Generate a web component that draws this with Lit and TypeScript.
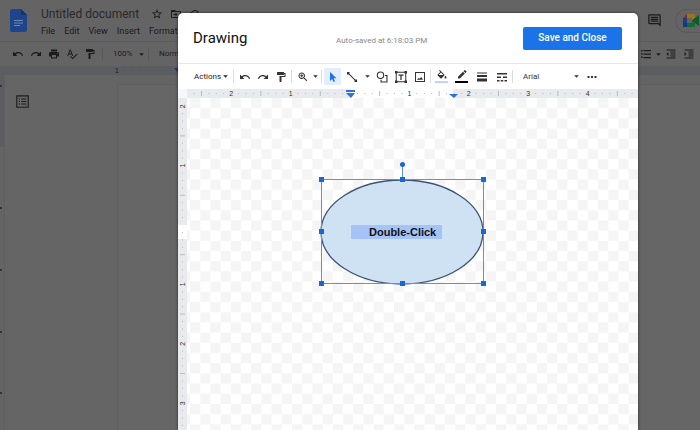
import { LitElement, html, svg, css } from "lit";
import { customElement } from "lit/decorators.js";

const ICONS: Record<string, string> = {
  undo: "M12.5 8c-2.65 0-5.05.99-6.9 2.6L2 7v9h9l-3.62-3.62c1.39-1.16 3.16-1.88 5.12-1.88 3.54 0 6.55 2.31 7.6 5.5l2.37-.78C21.08 11.03 17.15 8 12.5 8z",
  redo: "M18.4 10.6C16.55 8.99 14.15 8 11.5 8c-4.65 0-8.58 3.03-9.96 7.22L3.9 16c1.05-3.19 4.05-5.5 7.6-5.5 1.95 0 3.73.72 5.12 1.88L13 16h9V7l-3.6 3.6z",
  print: "M19 8H5c-1.66 0-3 1.34-3 3v6h4v4h12v-4h4v-6c0-1.66-1.34-3-3-3zm-3 11H8v-5h8v5zm3-7c-.55 0-1-.45-1-1s.45-1 1-1 1 .45 1 1-.45 1-1 1zm-1-9H6v4h12V3z",
  spell: "M12.45 16h2.09L9.43 3H7.57L2.46 16h2.09l1.12-3h5.64l1.14 3zm-6.02-5L8.5 5.48 10.57 11H6.43zm15.16.59l-8.09 8.09L9.83 16l-1.41 1.41 5.09 5.09L23 13l-1.41-1.41z",
  paint: "M18 4V3c0-.55-.45-1-1-1H5c-.55 0-1 .45-1 1v4c0 .55.45 1 1 1h12c.55 0 1-.45 1-1V6h1v4H9v11c0 .55.45 1 1 1h2c.55 0 1-.45 1-1v-9h8V4h-3z",
  zoom: "M15.5 14h-.79l-.28-.27C15.41 12.59 16 11.11 16 9.5 16 5.91 13.09 3 9.5 3S3 5.91 3 9.5 5.91 16 9.5 16c1.61 0 3.09-.59 4.23-1.57l.27.28v.79l5 4.99L20.49 19l-4.99-5zm-6 0C7.01 14 5 11.99 5 9.5S7.01 5 9.5 5 14 7.01 14 9.5 11.99 14 9.5 14zm1-7.5h-2v2h-2v2h2v2h2v-2h2v-2h-2z",
  select: "M6 2v18l4.2-4.2L13 22l3-1.4-2.800-6H19z",
  line: "M2 2h5v3.600L18.400 17H22v5h-5v-3.600L5.600 7H2z",
  shapes: "M9 1a7.500 7.500 0 1 0 0 15A7.500 7.500 0 0 0 9 1zm0 2.200a5.300 5.300 0 1 1 0 10.600A5.300 5.300 0 0 1 9 3.200zM18 8h5v15H9v-5.500h2.200v3.300h9.600V10.200H18z",
  textbox: "M0 0h5v5H0zM19 0h5v5h-5zM0 19h5v5H0zM19 19h5v5h-5zM5 1.500h14v2H5zM5 20.500h14v2H5zM1.500 5h2v14h-2zM20.500 5h2v14h-2zM7 7h10v2.500h-3.700V18h-2.600V9.500H7z",
  image: "M2 2h20v20H2zM4 4v16h16V4zM6 17.500l3.500-4 2 2 3-3.500 3.500 5.500z",
  fill: "M16.560 8.940L7.620 0 6.210 1.410l2.380 2.380-5.150 5.150c-.59.59-.59 1.540 0 2.120l5.500 5.500c.29.29.68.44 1.060.44s.77-.15 1.060-.44l5.500-5.500c.59-.58.59-1.530 0-2.120zM5.210 10L10 5.210 14.790 10H5.210zM19 11.500s-2 2.170-2 3.500c0 1.100.9 2 2 2s2-.9 2-2c0-1.330-2-3.500-2-3.500z",
  pen: "M17.750 7L14 3.250l-10 10V17h3.750l10-10zm2.960-2.960c.39-.39.39-1.020 0-1.410L18.370.29c-.39-.39-1.020-.39-1.410 0L15 2.250 18.750 6l1.960-1.960z",
  weight: "M2 3h20v2H2zM2 8h20v4H2zM2 15h20v6H2z",
  dash: "M2 4h20v3H2zM2 11h8v3H2zM14 11h8v3h-8zM2 18h5v3H2zM9.500 18h5v3h-5zM17 18h5v3h-5z",
  more: "M3 10h4v4H3zM10 10h4v4h-4zM17 10h4v4h-4z",
  list: "M2 4h3v3H2zM2 10.500h3v3H2zM2 17h3v3H2zM7 4h15v2.500H7zM7 11h15v2.500H7zM7 18h15v2.500H7z",
  outdent: "M11 17h10v-2H11v2zm-8-5l4 4V8l-4 4zm0 9h18v-2H3v2zM3 3v2h18V3H3zm8 6h10V7H11v2zm0 4h10v-2H11v2z",
  indent: "M3 21h18v-2H3v2zM3 8v8l4-4-4-4zm8 9h10v-2H11v2zM3 3v2h18V3H3zm8 6h10V7H11v2zm0 4h10v-2H11v2z",
  comment: "M22 4c0-1.100-.89-2-2-2H4c-1.100 0-2 .9-2 2v12c0 1.100.9 2 2 2h14l4 4V4zM20 4v13.170L18.830 16H4V4h16zM6 12h12v2H6zm0-3h12v2H6zm0-3h12v2H6z",
  star: "M22 9.240l-7.190-.62L12 2 9.190 8.630 2 9.240l5.460 4.730L5.820 21 12 17.270 18.180 21l-1.630-7.030L22 9.240zM12 15.400l-3.760 2.270 1-4.280-3.320-2.880 4.380-.38L12 6.100l1.710 4.040 4.380.38-3.320 2.880 1 4.280L12 15.400z",
  folder: "M20 6h-8l-2-2H4c-1.100 0-2 .9-2 2v12c0 1.100.9 2 2 2h16c1.100 0 2-.9 2-2V8c0-1.100-.9-2-2-2zm0 12H4V8h16v10zM11 9l4 4-4 4v-3H7v-2h4z",
  cloud: "M19.350 10.040C18.670 6.590 15.640 4 12 4 9.110 4 6.600 5.640 5.350 8.040 2.340 8.360 0 10.910 0 14c0 3.310 2.690 6 6 6h13c2.760 0 5-2.240 5-5 0-2.640-2.050-4.780-4.650-4.960zM19 18H6c-2.210 0-4-1.790-4-4s1.800-4 4-4c1-2.500 3-4 6-4 3 0 5 2 5.500 6H19a3 3 0 0 1 0 6z",
  outline: "M2 2h20v20H2zM3.800 3.800v16.400h16.400V3.800zM6 7h2v1.800H6zM10 7h8v1.800h-8zM6 11h2v1.800H6zM10 11h8v1.800h-8zM6 15h2v1.800H6zM10 15h8v1.800h-8z",
  caret: "M4 8l8 8 8-8z",
};

const icon = (name: string) =>
  html`<svg class="icon ${name}" viewBox="0 0 24 24" aria-hidden="true"><path d=${ICONS[name]} fill="currentColor" fill-rule="evenodd" /></svg>`;

const tool = (name: string, label: string, extra = "") =>
  html`<button class="tool ${extra}" aria-label=${label}>${icon(name)}</button>`;

const INCH = 59.4;

/** Tick marks every eighth of an inch, numbers on whole inches. */
function ruler(origin: number, from: number, to: number, vertical = false) {
  const marks = [];
  for (let i = Math.ceil(((from - origin) / INCH) * 8); origin + (i * INCH) / 8 < to; i++) {
    const at = origin + (i * INCH) / 8;
    if (i % 8 === 0) {
      if (i === 0) continue;
      const n = Math.abs(i / 8);
      marks.push(
        vertical
          ? svg`<text class="num" text-anchor="middle" transform="translate(7 ${at}) rotate(-90)">${n}</text>`
          : svg`<text class="num" text-anchor="middle" x=${at} y="7">${n}</text>`,
      );
      continue;
    }
    const half = i % 4 === 0;
    const a = half ? 2 : 4;
    const b = half ? 7 : 5;
    marks.push(
      vertical
        ? svg`<line class="tick" x1=${a} x2=${b} y1=${at} y2=${at} />`
        : svg`<line class="tick" x1=${at} x2=${at} y1=${a} y2=${b} />`,
    );
  }
  return marks;
}

const shared = css`
  * { box-sizing: border-box; }
  button, select {
    font: inherit;
    color: inherit;
    background: none;
    border: 0;
    padding: 0;
    margin: 0;
    appearance: none;
  }
  .icon { display: block; width: 12px; height: 12px; flex: none; }
  .icon.caret { width: 7px; height: 7px; }
  .tool { display: flex; align-items: center; justify-content: center; width: 17px; height: 17px; flex: none; }
  .num { font: 7px "Liberation Sans", sans-serif; }
`;

@customElement("docs-page")
export class DocsPage extends LitElement {
  static styles = [
    shared,
    css`
      :host {
        display: flex;
        flex-direction: column;
        height: 100vh;
        overflow: hidden;
        background: #646464;
        color: #1b1b1c;
        font: 9px/12px Roboto, sans-serif;
      }
      header { display: flex; height: 42px; padding-left: 10px; border-bottom: 1px solid #5b5b5c; flex: none; }
      .logo { width: 17px; height: 23px; margin: 9px 14px 0 0; flex: none; }
      .titles { padding-top: 6px; }
      .name-row { display: flex; align-items: center; gap: 7px; height: 16px; }
      h1 { margin: 0 5px 0 0; font-size: 12px; line-height: 16px; font-weight: 400; color: #292929; white-space: nowrap; }
      nav { display: flex; gap: 9px; margin-top: 3px; }
      .right { display: flex; margin-left: auto; align-items: center; }
      .comment .icon { width: 15px; height: 15px; }
      .meet { display: flex; align-items: center; width: 25px; height: 24px; padding-left: 7px; margin-left: 13px; border: 1px solid #5a5a5b; border-right: 0; border-radius: 12px 0 0 12px; }
      .bar { display: flex; align-items: center; height: 24px; padding: 0 2px 0 9px; flex: none; font-size: 8px; }
      .bar .tool { width: 18px; }
      .sep { width: 1px; height: 12px; background: #595959; margin: 0 10px 0 3px; flex: none; }
      .bar select { width: 25px; height: 14px; }
      .bar .style { width: 44px; }
      .end { display: flex; align-items: center; margin-left: auto; }
      .hruler { display: block; width: 100%; height: 9px; background: #5c5d60; flex: none; }
      .body { display: flex; flex: 1; }
      .vruler { width: 5px; border-right: 1px solid #606060; flex: none; }
      .side { width: 112px; padding: 19px 0 0 10px; background: #656565; }
      .side .icon { width: 15px; height: 15px; }
      .paper { flex: 1; margin-top: 9px; border: 1px solid #5f5f5f; border-width: 1px 0 0 1px; background: #666; }
      .tick { stroke: #4f5052; }
      .num { fill: #1f1f1f; }
    `,
  ];

  render() {
    return html`
      <header>
        <svg class="logo" viewBox="0 0 17 23" role="img" aria-label="Docs">
          <path d="M2 0h9l6 6v15a2 2 0 0 1-2 2H2a2 2 0 0 1-2-2V2a2 2 0 0 1 2-2z" fill="#1e458c" />
          <path d="M11 0l6 6h-6z" fill="#16336a" />
          <path d="M4 11.500h9M4 14h9M4 16.500h6" stroke="#7088b4" stroke-width="1.200" />
        </svg>
        <div class="titles">
          <div class="name-row">
            <h1>Untitled document</h1>
            ${icon("star")}${icon("folder")}${icon("cloud")}
          </div>
          <nav>
            ${["File", "Edit", "View", "Insert", "Format"].map((m) => html`<button>${m}</button>`)}
          </nav>
        </div>
        <div class="right">
          <button class="comment" aria-label="Comments">${icon("comment")}</button>
          <button class="meet" aria-label="Meet">
            <svg width="16" height="13" viewBox="0 0 16 13" aria-hidden="true">
              <path d="M0 4h4v5H0z" fill="#173f86" />
              <path d="M4 0v4H0z" fill="#8c2a22" />
              <path d="M4 0h7a1 1 0 0 1 1 1v3l-3 2.500V4H4z" fill="#95751a" />
              <path d="M0 9h4v4H1a1 1 0 0 1-1-1z" fill="#12397c" />
              <path d="M4 9h5V6.500L12 9v3a1 1 0 0 1-1 1H4z" fill="#146a35" />
              <path d="M9 6.500L15 1.500a.6.6 0 0 1 1 .5v9a.6.6 0 0 1-1 .5z" fill="#0f5a2a" />
            </svg>
          </button>
        </div>
      </header>
      <div class="bar">
        ${tool("undo", "Undo")}${tool("redo", "Redo")}${tool("print", "Print")}${tool("spell", "Spell check")}${tool("paint", "Paint format")}
        <span class="sep"></span>
        <select aria-label="Zoom"><option>100%</option></select>${icon("caret")}
        <span class="sep"></span>
        <select class="style" aria-label="Style"><option>Normal text</option></select>
        <div class="end">${tool("list", "Numbered list")}${icon("caret")}${tool("outdent", "Decrease indent")}${tool("indent", "Increase indent")}</div>
      </div>
      <svg class="hruler" aria-hidden="true">
        ${[125, 133, 141, 148, 156, 164, 171].map((x) => svg`<line class="tick" x1=${x} x2=${x} y1="4" y2="5" />`)}
        <text class="num" x="115" y="7">1</text>
        <path d="M174 2h7l-3 5z" fill="#1a3a80" />
      </svg>
      <div class="body">
        <svg class="vruler" aria-hidden="true">
          <rect width="5" height="72" fill="#5c5d60" />
          ${[10, 132, 194, 256, 317].map((y) => svg`<rect y=${y} width="2" height="2" fill="#333" />`)}
        </svg>
        <div class="side"><button aria-label="Show outline">${icon("outline")}</button></div>
        <div class="paper"></div>
      </div>
    `;
  }
}

@customElement("drawing-dialog")
export class DrawingDialog extends LitElement {
  static styles = [
    shared,
    css`
      :host {
        display: flex;
        flex-direction: column;
        background: #fff;
        color: #333;
        border-radius: 5px 5px 0 0;
        overflow: hidden;
        box-shadow: 0 0 3px #222;
        font: 8px/12px Roboto, sans-serif;
      }
      header { display: flex; align-items: center; height: 50px; padding: 0 16px 0 15px; flex: none; }
      h2 { margin: 0; width: 143px; font-size: 15px; line-height: 18px; font-weight: 400; color: #111; }
      .saved { color: #888; padding-top: 5px; }
      .save { margin-left: auto; width: 99px; height: 23px; border-radius: 2px; background: #1a73e8; color: #fff; font-size: 10px; font-weight: 500; }
      .bar { display: flex; align-items: center; height: 26px; padding-left: 16px; border-top: 1px solid #e6e6e6; flex: none; }
      .group { display: flex; align-items: center; gap: 1px; }
      .group.wide { gap: 2px; }
      .group.colors { gap: 3px; }
      .sep { width: 1px; height: 13px; background: #dcdcdc; margin: 0 2px; flex: none; }
      .actions { display: flex; align-items: center; gap: 1px; width: 37px; color: #222; }
      .active { background: #e3eefd; color: #1a73e8; border-radius: 1px; }
      .split { display: flex; align-items: center; width: 28px; gap: 4px; }
      .chip { width: 13px; height: 13px; margin: 0 2px; border-bottom: 2px solid #bcd7f5; }
      .chip.black { border-color: #000; }
      .font { display: flex; align-items: center; width: 57px; margin: 0 3px 0 8px; }
      .font select { flex: 1; }
      .stage { display: grid; grid-template: 9px 1fr / 9px 1fr; flex: 1; min-height: 0; }
      .corner { background: #f6f7f8; }
      .hruler, .vruler, .canvas { display: block; width: 100%; height: 100%; background: #e9eaed; overflow: hidden; }
      .canvas { background: #fff; }
      .tick { stroke: #b9bbc0; }
      .num { fill: #333; }
      .label { font: bold 11px "Liberation Sans", sans-serif; fill: #111; }
    `,
  ];

  render() {
    const handles = [134, 215, 296].flatMap((x) => [81, 133, 185].map((y) => [x, y])).filter(([x, y]) => x !== 215 || y !== 133);
    return html`
      <header>
        <h2>Drawing</h2>
        <span class="saved">Auto-saved at 6:18:03 PM</span>
        <button class="save">Save and Close</button>
      </header>
      <div class="bar">
        <button class="actions">Actions${icon("caret")}</button>
        <span class="sep"></span>
        <div class="group">${tool("undo", "Undo")}${tool("redo", "Redo")}${tool("paint", "Paint format")}</div>
        <span class="sep"></span>
        <div class="group">${tool("zoom", "Zoom")}${icon("caret")}</div>
        <span class="sep"></span>
        <div class="group wide">
          ${tool("select", "Select", "active")}
          <div class="split">${tool("line", "Line")}${icon("caret")}</div>
          ${tool("shapes", "Shape")}${tool("textbox", "Text box")}${tool("image", "Image")}
        </div>
        <span class="sep"></span>
        <div class="group colors">
          ${tool("fill", "Fill color", "chip")}${tool("pen", "Border color", "chip black")}${tool("weight", "Border weight")}${tool("dash", "Border dash")}
        </div>
        <span class="sep"></span>
        <div class="font"><select aria-label="Font"><option>Arial</option></select>${icon("caret")}</div>
        ${tool("more", "More")}
      </div>
      <div class="stage">
        <div class="corner"></div>
        <svg class="hruler" aria-hidden="true">
          <rect x="163" width="103" height="9" fill="#fff" />
          ${ruler(163, 2, 450)}
          <path d="M159 1h9v2h-9zM159 4h9l-4 5z" fill="#2f6fe0" />
          <path d="M262 5h9l-4 4z" fill="#2f6fe0" />
        </svg>
        <svg class="vruler" aria-hidden="true">
          <rect y="127" width="9" height="14" fill="#fff" />
          ${ruler(127, 2, 330, true)}
        </svg>
        <svg class="canvas" role="img" aria-label="Drawing canvas">
          <defs>
            <pattern id="checks" width="2" height="2" patternUnits="userSpaceOnUse" patternTransform="translate(3 0) scale(10.2)">
              <path d="M0 0h1v1H0zM1 1h1v1H1z" fill="#f5f5f5" />
            </pattern>
          </defs>
          <rect width="100%" height="100%" fill="url(#checks)" />
          <ellipse cx="215" cy="134" rx="81" ry="52" fill="#cfe2f3" stroke="#3d5475" stroke-width="1.300" />
          <rect x="164" y="127" width="91" height="14" fill="#a6c3f7" />
          <text class="label" x="182" y="138">Double-Click</text>
          <path d="M134.500 81.500h162v104h-162zM215.500 82V67" fill="none" stroke="#5b93d6" />
          ${handles.map(([x, y]) => svg`<rect x=${x - 2} y=${y - 2} width="5" height="5" fill="#1967d2" />`)}
          <circle cx="215.500" cy="66.500" r="2.500" fill="#1967d2" />
        </svg>
      </div>
    `;
  }
}

@customElement("app-root")
export class AppRoot extends LitElement {
  static styles = css`
    :host { display: block; position: relative; height: 100vh; overflow: hidden; }
    .overlay { position: absolute; inset: 0; display: flex; padding: 13px 62px 0 178px; }
    drawing-dialog { flex: 1; min-width: 0; }
  `;

  render() {
    return html`
      <docs-page></docs-page>
      <div class="overlay"><drawing-dialog role="dialog" aria-label="Drawing"></drawing-dialog></div>
    `;
  }
}
